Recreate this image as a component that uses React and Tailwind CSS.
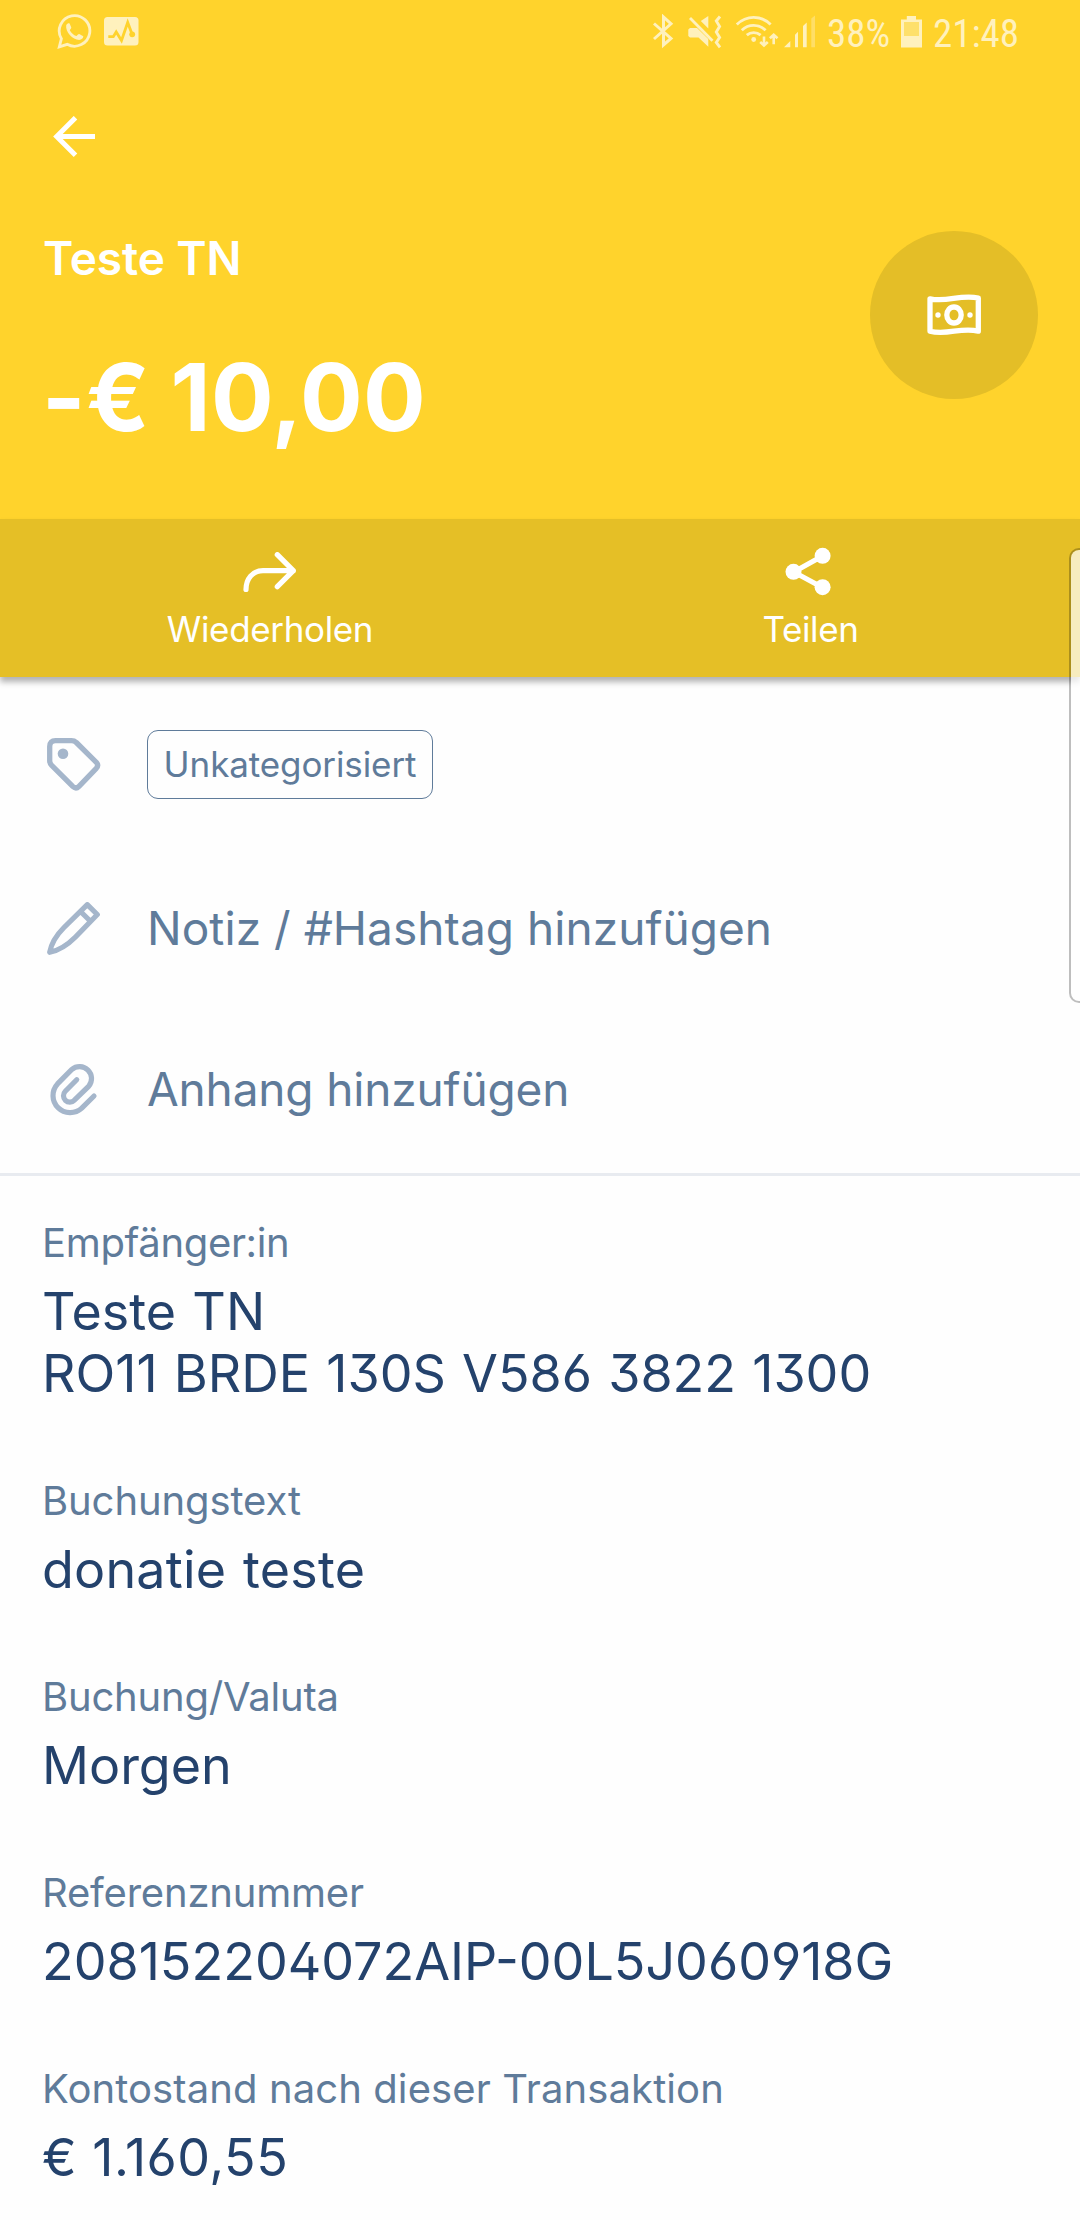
/**
 * TransactionDetail - Buchungsdetails
 * header with amount, two actions, editable rows, booking data
 */

const DETAILS = [
  {
    label: 'Empfänger:in',
    lines: ['Teste TN', 'RO11 BRDE 130S V586 3822 1300'],
    labelClass: 'tracking-[-0.35px]',
    valueClass: '[word-spacing:1.6px]',
  },
  { label: 'Buchungstext', lines: ['donatie teste'], labelClass: 'tracking-[-0.1px]', valueClass: 'tracking-[0.2px] [word-spacing:2px]' },
  { label: 'Buchung/Valuta', lines: ['Morgen'], labelClass: 'tracking-[-0.2px]', valueClass: '' },
  { label: 'Referenznummer', lines: ['208152204072AIP-00L5J060918G'], labelClass: 'tracking-[-0.2px]', valueClass: '' },
  {
    label: 'Kontostand nach dieser Transaktion',
    lines: ['€ 1.160,55'],
    labelClass: 'tracking-[0.1px]',
    valueClass: 'tracking-[0.5px]',
  },
]

function StatusBar() {
  return (
    <div className="flex h-[66px] items-start pt-[14px] pl-[57px] font-[Roboto] font-stretch-condensed text-[39px] leading-[40px] whitespace-nowrap text-[#fff1bd]">
      {/* WhatsApp */}
      <svg className="h-9 w-9" viewBox="0 0 36 36" fill="none">
        <path d="M4.4 24.7A15.3 15.3 0 1 1 10.2 30.3L2.3 32.8Z" stroke="currentColor" strokeWidth="2.8" />
        <path
          d="M9.2 11.2C10 9.6 11.5 9 12.6 9.4L14.3 13.6C14.2 14.7 13.2 15.3 12.8 16.2C14.3 19 16.6 21 19.4 22.1C20.4 21.6 21 20.2 22.2 20.1L26.3 22.3C26.3 24.4 24.5 25.9 22.2 25.9C15.5 25.5 8.2 18 9.2 11.2Z"
          fill="currentColor"
        />
      </svg>
      <svg className="mt-[3px] ml-[11px] h-[29px] w-[35px]" viewBox="0 0 35 29" fill="none">
        <rect width="34.5" height="28.5" rx="3.5" fill="currentColor" />
        <path d="M4.3 19.7H9.3L12.2 15L17.5 23.5L23.7 5.5L28 17" stroke="#FFD32C" strokeWidth="2.8" />
        <circle cx="28.2" cy="17.3" r="2.9" fill="#FFD32C" />
      </svg>

      {/* Bluetooth */}
      <svg className="ml-[513px] h-9 w-[22px]" viewBox="0 0 22 36" fill="none" stroke="currentColor" strokeWidth="3">
        <path d="M2 9.5L19 24.5L11.5 31V3L19 9.8L2 25" />
      </svg>
      {/* muted, vibrating */}
      <svg className="ml-[14px] h-9 w-9" viewBox="0 0 36 36" fill="none">
        <path d="M0.3 15.5L2 14H9L20.3 25V32.8L10.5 23.5H2L0.3 22Z" fill="currentColor" />
        <path d="M12.8 7L20.3 2V14.5Z" fill="currentColor" />
        <path d="M2 4L24.5 26.7" stroke="currentColor" strokeWidth="2.8" />
        <path d="M32 2.5L28.3 7L31.6 12.5L28.3 18L31.6 23.5L28.3 28.5L32 33.3" stroke="currentColor" strokeWidth="2.9" />
      </svg>
      <svg className="ml-[11px] h-9 w-[44px]" viewBox="0 0 44 36" fill="none" stroke="currentColor" strokeWidth="2.9">
        <path d="M1.8 10.5C11.5 1 26 1 35.6 10.5" />
        <path d="M6.8 16.2C13.5 9.8 23.8 9.8 30.6 16.2" />
        <path d="M11.8 21.2C15.7 17.8 21.7 17.8 25.6 21.2" />
        <circle cx="18.7" cy="25.5" r="2.4" fill="currentColor" stroke="none" />
        <path d="M29 22.5V31M25.2 28L29 31.5L32.8 28M38.7 30.3V21M34.9 24.3L38.7 20.7L42.5 24.3" strokeWidth="2.6" />
      </svg>
      <svg className="ml-[5px] h-9 w-8" viewBox="0 0 32 36" fill="currentColor">
        <path d="M0 33.3L6.3 27V33.3ZM11 20.7L14 17.8V33.3H11ZM19 12L22.7 8.5V33.3H19Z" />
        <path d="M27.3 4.5L31 1.5V33.3H27.3Z" opacity=".4" />
      </svg>
      <span className="ml-[11px] w-[62px]">38%</span>
      <svg className="ml-[12px] h-9 w-[21px]" viewBox="0 0 21 36" fill="currentColor">
        <path d="M0 5.5H5.8V2H15V5.5H21V33.5H0Z" />
        <rect x="3" y="8" width="15" height="14" fill="#FEE06B" />
      </svg>
      <span className="ml-[11px]">21:48</span>
    </div>
  )
}

function Header() {
  return (
    <header className="h-[519px] bg-[#FFD32C] text-white">
      <StatusBar />
      <svg className="mt-[50px] ml-[53px] h-[42px] w-[42px]" viewBox="0 0 42 42" fill="none" stroke="currentColor" strokeWidth="5">
        <path d="M42 20.5H3.5M22.5 1.7L3.7 20.5L22.5 39.3" />
      </svg>
      <div className="mt-[73px] flex justify-between px-[42px]">
        <div className="-mt-[1px]">
          <h1 className="pl-[1px] text-[46px] leading-[56px] font-semibold tracking-[-0.1px]">Teste TN</h1>
          <p className="mt-[56px] text-[93px] leading-[110px] font-bold tracking-[0.4px] [word-spacing:-2px]">-€ 10,00</p>
        </div>
        <div className="flex h-[168px] w-[168px] items-center justify-center rounded-full bg-[#E4BE27]">
          <svg className="h-[42px] w-[54px]" viewBox="0 0 54 42" fill="none" stroke="currentColor" strokeWidth="5.3" strokeLinejoin="round">
            <path d="M3 4.8C20 8.8 33 0 51.3 4V37.2C34 32.5 20 42 3 37.2Z" />
            <ellipse cx="27" cy="21" rx="7.2" ry="8" />
            <circle cx="11" cy="21" r="2.7" fill="currentColor" stroke="none" />
            <circle cx="43" cy="21" r="2.7" fill="currentColor" stroke="none" />
          </svg>
        </div>
      </div>
    </header>
  )
}

function Actions() {
  return (
    <nav className="relative grid h-[158px] grid-cols-2 bg-[#E5BF26] text-[35px] leading-[42px] tracking-[-0.35px] text-white shadow-[0_5px_6px_rgba(0,0,0,0.3)]">
      <div className="flex flex-col items-center pt-[33px]">
        <svg className="h-[42px] w-[54px]" viewBox="0 0 54 42" fill="none" stroke="currentColor" strokeWidth="5.2" strokeLinecap="round" strokeLinejoin="round">
          <path d="M3 37.5C3 27 9.5 18.7 20 18.7H50.3M34.3 2.7L50.3 18.7L34.3 34.7" />
        </svg>
        <span className="mt-[14px]">Wiederholen</span>
      </div>
      <div className="flex flex-col items-center pt-[28px]">
        <svg className="mr-1 h-[50px] w-[46px]" viewBox="0 0 46 50" fill="currentColor">
          <path d="M37.5 9L8.7 25L37.5 40.5" fill="none" stroke="currentColor" strokeWidth="5" />
          <circle cx="8.5" cy="24.8" r="8" />
          <circle cx="37.6" cy="8.8" r="8" />
          <circle cx="37.6" cy="40.2" r="8" />
        </svg>
        <span className="mt-[11px] ml-[1px]">Teilen</span>
      </div>
    </nav>
  )
}

function EditRows() {
  return (
    <section className="border-b-[3px] border-[#E8EBF0] text-[46px] text-[#5F7B9A]">
      <div className="flex h-[174px] items-center pl-[47px]">
        <svg className="mt-[2px] h-[54px] w-[54px] text-[#A5B6CB]" viewBox="0 0 54 54" fill="none" stroke="currentColor" strokeWidth="5.3" strokeLinejoin="round">
          <path d="M8.5 2.7H24.5Q27.3 2.7 29.3 4.5L49.3 24.3Q52 27.3 49.3 30.3L32 48.3Q29 51.3 26 48.6L4.7 27.3Q2.7 25.2 2.7 23V8.5Q2.7 2.7 8.5 2.7Z" />
          <circle cx="16" cy="15.7" r="5.3" fill="currentColor" stroke="none" />
        </svg>
        <span className="ml-[46px] flex h-[69px] w-[286px] items-center justify-center rounded-[11px] border border-[#5F7B9A] text-[35px] tracking-[-0.1px]">
          Unkategorisiert
        </span>
      </div>
      <div className="flex h-[155px] items-center pl-[47px]">
        <svg className="h-[54px] w-[54px] text-[#A5B6CB]" viewBox="0 0 54 54" fill="none" stroke="currentColor" strokeWidth="5.2" strokeLinejoin="round">
          <path d="M2.7 50.3C4.5 40.5 9.5 33 17 25.5L40.3 2.7L50.3 12.5L28.5 35C20.5 43 12 48.5 2.7 50.3ZM33.5 9.5L43.7 19.5" />
        </svg>
        <span className="ml-[46px] tracking-[0.05px]">Notiz / #Hashtag hinzufügen</span>
      </div>
      <div className="flex h-[167px] items-center pl-[50px]">
        <svg className="h-[54px] w-[48px] text-[#A5B6CB]" viewBox="0 0 48 54" fill="none" stroke="currentColor" strokeWidth="5.2" strokeLinecap="round">
          <path d="M44 33L31.8 45.2A17.2 17.2 0 0 1 7.5 20.9L21.8 6.4A12 12 0 0 1 38.8 23.2L24.4 37.2A6.3 6.3 0 0 1 15.3 28.3L26.7 16.7" />
        </svg>
        <span className="ml-[49px] tracking-[-0.15px]">Anhang hinzufügen</span>
      </div>
    </section>
  )
}

export default function App() {
  return (
    <div className="relative h-[2220px] w-[1080px] overflow-hidden bg-[#FEFEFE] font-[Inter,sans-serif]">
      <Header />
      <Actions />
      <EditRows />

      <dl className="flex flex-col gap-[72px] pt-[43px] pl-[42px]">
        {DETAILS.map((d) => (
          <div key={d.label}>
            <dt className={`text-[40px] leading-[48px] text-[#5F7B9A] ${d.labelClass}`}>{d.label}</dt>
            {/* ss01: open digits */}
            <dd className={`mt-[14px] text-[52px] leading-[62px] text-[#24426C] [font-feature-settings:'ss01'] ${d.valueClass}`}>
              {d.lines.map((line) => (
                <div key={line}>{line}</div>
              ))}
            </dd>
          </div>
        ))}
      </dl>

      {/* edge panel handle */}
      <div className="absolute top-[548px] -right-[9px] h-[455px] w-[20px] rounded-[14px] border-2 border-black/25 bg-white/70 bg-clip-padding" />
    </div>
  )
}
